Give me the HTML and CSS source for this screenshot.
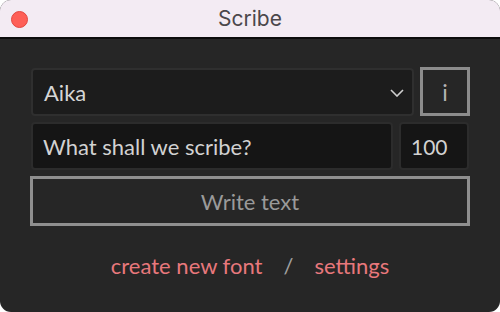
FILE: index.html
```html
<!doctype html>
<html lang="en">
<head>
	<meta charset="UTF-8">
	<title>Scribe</title>
	<link rel="stylesheet" href="styles.css">
</head>
<body>
	<div class="window">
		<div class="titlebar">
			<span class="close"></span>
			<span class="title">Scribe</span>
		</div>
		<div class="panel">
			<div class="row">
				<div class="select">
					<span class="select_val">Aika</span>
					<svg class="chevron" width="14" height="8" viewBox="0 0 14 8"><polyline points="1,1 7,7 13,1" fill="none" stroke="#cfcfcf" stroke-width="1.6"/></svg>
				</div>
				<a href="javascript:;" class="info">i</a>
			</div>
			<div class="row">
				<div class="field text">What shall we scribe?</div>
				<div class="field num">100</div>
			</div>
			<a href="javascript:;" class="write">Write text</a>
			<div class="links">
				<a href="javascript:;">create new font</a>
				<span class="sep">/</span>
				<a href="javascript:;">settings</a>
			</div>
		</div>
	</div>
</body>
</html>
```

FILE: styles.css
```css
*{margin:0; padding:0; box-sizing:border-box;}
a{text-decoration:none;}
body{background:#fff; overflow:hidden;}

.window{
	width:500px;
	height:312px;
	border-radius:11px;
	overflow:hidden;
	background:#262626;
	display:flex;
	flex-direction:column;
	font-family:Lato, "Open Sans", sans-serif;
}
.titlebar{
	height:39px;
	background:#f3ebf3;
	border-bottom:2px solid #0c0c0c;
	position:relative;
	display:flex;
	align-items:center;
	justify-content:center;
}
.close{
	position:absolute;
	left:11px; top:11px;
	width:17px; height:17px;
	border-radius:50%;
	background:#fe5f57;
	border:1px solid #e2463f;
}
.title{
	font-family:Inter, "Noto Sans", sans-serif;
	font-size:21px;
	color:#4b474b;
	margin-top:-1px;
}

.panel{
	padding:29px 30px 0 30px;
	display:flex;
	flex-direction:column;
	gap:6px;
}
.row{
	display:flex;
	gap:6px;
	padding:0 1px;
}
.select{
	flex:1;
	height:48px;
	background:#1c1c1c;
	border:2px solid #2f2f2f;
	border-radius:4px;
	display:flex;
	align-items:center;
	justify-content:space-between;
	padding:0 8px 0 11px;
	color:#d6d6d6;
	font-size:22px;
}
.chevron{margin-top:1px;}
.info{
	width:50px;
	height:49px;
	margin:-1px -1px 0 0;
	border:3px solid #8c8c8c;
	display:flex;
	align-items:center;
	justify-content:center;
	color:#b4b4b4;
	font-size:23px;
}
.field{
	height:48px;
	background:#151515;
	border:2px solid #2c2c2c;
	border-radius:4px;
	display:flex;
	align-items:center;
	color:#d2d2d2;
	font-size:22px;
}
.text{flex:1; padding-left:10px;}
.num{width:70px; padding-left:10px; font-size:21px;}

.write{
	height:50px;
	border:3px solid #8f8f8f;
	display:flex;
	align-items:center;
	justify-content:center;
	color:#9a9a9a;
	font-size:22px;
}

.links{
	margin-top:20px;
	display:flex;
	justify-content:center;
	gap:21px;
	font-size:22px;
}
.links a{color:#e8787c;}
.sep{color:#a0a0a0;}
```
